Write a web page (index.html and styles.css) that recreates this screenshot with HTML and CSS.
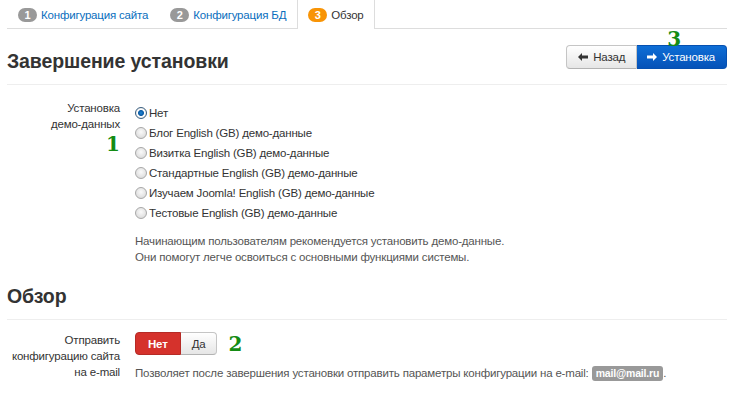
FILE: index.html
```html
<!DOCTYPE html>
<html lang="ru">
<head>
    <meta charset="UTF-8">
    <title>Установка Joomla</title>
    <link rel="stylesheet" href="styles.css">
</head>
<body>
    <div class="page">
        <ul class="steps">
            <li class="step"><span class="badge">1</span><a href="#">Конфигурация сайта</a></li>
            <li class="step"><span class="badge">2</span><a href="#">Конфигурация БД</a></li>
            <li class="step active"><span class="badge badge-warning">3</span><span>Обзор</span></li>
        </ul>

        <div class="page-head">
            <h1>Завершение установки</h1>
            <div class="btn-group">
                <span class="mark mark-top">3</span>
                <button class="btn">
                    <svg width="10" height="8" viewBox="0 0 10 8"><path d="M0 4 L4 0 L4 2.5 L10 2.5 L10 5.5 L4 5.5 L4 8 Z" fill="#333"/></svg>
                    Назад
                </button>
                <button class="btn btn-primary">
                    <svg width="10" height="8" viewBox="0 0 10 8"><path d="M10 4 L6 0 L6 2.5 L0 2.5 L0 5.5 L6 5.5 L6 8 Z" fill="#fff"/></svg>
                    Установка
                </button>
            </div>
        </div>

        <div class="control-group">
            <div class="control-label">
                <label>Установка <span class="nowrap">демо-данных</span></label>
                <div class="mark">1</div>
            </div>
            <div class="controls">
                <label class="radio"><input type="radio" name="sample" checked> Нет</label>
                <label class="radio"><input type="radio" name="sample"> Блог English (GB) демо-данные</label>
                <label class="radio"><input type="radio" name="sample"> Визитка English (GB) демо-данные</label>
                <label class="radio"><input type="radio" name="sample"> Стандартные English (GB) демо-данные</label>
                <label class="radio"><input type="radio" name="sample"> Изучаем Joomla! English (GB) демо-данные</label>
                <label class="radio"><input type="radio" name="sample"> Тестовые English (GB) демо-данные</label>
                <p class="help">Начинающим пользователям рекомендуется установить демо-данные.<br>Они помогут легче освоиться с основными функциями системы.</p>
            </div>
        </div>

        <h2 class="section-title">Обзор</h2>

        <div class="control-group">
            <div class="control-label">
                <label>Отправить <span class="nowrap">конфигурацию сайта</span> на e-mail</label>
            </div>
            <div class="controls">
                <div class="toggle-row">
                    <div class="toggle">
                        <button class="btn btn-danger">Нет</button>
                        <button class="btn">Да</button>
                    </div>
                    <span class="mark">2</span>
                </div>
                <p class="help">Позволяет после завершения установки отправить параметры конфигурации на e-mail: <span class="label">mail@mail.ru</span>.</p>
            </div>
        </div>
    </div>
</body>
</html>
```

FILE: styles.css
```css
* {
    box-sizing: border-box;
    margin: 0;
    padding: 0;
}

body {
    font-family: "Liberation Sans", Arial, sans-serif;
    font-size: 11.5px;
    letter-spacing: -0.18px;
    line-height: 16px;
    color: #333;
    background: #fff;
}

.page {
    padding: 0 7px;
}

.nowrap {
    white-space: nowrap;
}

.steps {
    list-style: none;
    display: flex;
    height: 29px;
    border-bottom: 1px solid #ddd;
}

.step {
    display: flex;
    align-items: center;
    gap: 4px;
    padding: 0 10px;
    border: 1px solid transparent;
    border-bottom: none;
}

.step a {
    color: #0a6ebd;
    text-decoration: none;
}

.step.active {
    border-color: #ddd;
    border-top: none;
    margin-bottom: -1px;
    background: #fff;
    height: 29px;
}

.badge {
    display: inline-block;
    min-width: 19px;
    height: 14px;
    line-height: 14px;
    border-radius: 8px;
    background: #999;
    color: #fff;
    font-size: 11px;
    font-weight: bold;
    letter-spacing: 0;
    text-align: center;
}

.badge-warning {
    background: #f89406;
}

.page-head {
    display: flex;
    justify-content: space-between;
    align-items: flex-start;
    margin-top: 16px;
    padding-bottom: 11px;
    border-bottom: 1px solid #eee;
}

h1,
.section-title {
    font-size: 19.5px;
    line-height: 24px;
    font-weight: bold;
    letter-spacing: -0.1px;
    color: #333;
}

h1 {
    padding-top: 4px;
}

.btn-group {
    position: relative;
    display: flex;
}

.btn {
    display: inline-flex;
    align-items: center;
    gap: 5px;
    height: 24px;
    padding: 0 11px;
    font-family: inherit;
    font-size: 11.5px;
    letter-spacing: -0.18px;
    color: #333;
    background: linear-gradient(#fff, #e6e6e6);
    border: 1px solid #c5c5c5;
    border-bottom-color: #b3b3b3;
    cursor: pointer;
}

.btn-group .btn:first-of-type,
.toggle .btn:first-child {
    border-radius: 4px 0 0 4px;
}

.btn-group .btn:last-child,
.toggle .btn:last-child {
    border-radius: 0 4px 4px 0;
    border-left: none;
}

.btn-primary {
    color: #fff;
    background: linear-gradient(#0e6ed6, #0552b8);
    border-color: #0650b0;
    padding: 0 11px 0 10px;
}

.btn-danger {
    color: #fff;
    font-weight: bold;
    background: #d5322c;
    border-color: #b52b26;
    padding: 0 12px;
}

.mark {
    font-family: "DejaVu Serif", "Liberation Serif", serif;
    font-size: 20px;
    line-height: 16px;
    font-weight: bold;
    letter-spacing: 0;
    color: #148c14;
}

.mark-top {
    position: absolute;
    top: -14px;
    left: 101px;
}

.control-group {
    display: flex;
    margin-top: 15px;
}

.control-label {
    width: 113px;
    text-align: right;
    flex-shrink: 0;
}

.control-label .mark {
    margin-top: 4px;
}

.controls {
    margin-left: 15px;
    padding-top: 3px;
}

.radio {
    display: flex;
    align-items: center;
    gap: 2px;
    height: 20px;
}

.radio input {
    appearance: none;
    width: 12px;
    height: 12px;
    border-radius: 50%;
    border: 1px solid #a8a8a8;
    background: radial-gradient(circle at 50% 40%, #fafafa, #d4d4d4);
    margin: 0;
}

.radio input:checked {
    border-color: #3a5f80;
    background: radial-gradient(circle, #1f86d6 0, #0a5aa4 2.5px, #fff 3.5px, #dcdcdc 6px);
}

.help {
    margin-top: 10px;
    color: #555;
}

.section-title {
    margin-top: 19px;
    padding-bottom: 11px;
    border-bottom: 1px solid #eee;
}

.control-group + .section-title + .control-group {
    margin-top: 12px;
}

.controls:has(.toggle-row) {
    padding-top: 0;
}

.toggle-row {
    display: flex;
    align-items: center;
    gap: 11px;
}

.toggle {
    display: flex;
}

.toggle .btn {
    height: 23px;
}

.label {
    display: inline-block;
    padding: 0 4px;
    background: #999;
    color: #fff;
    font-size: 10.5px;
    font-weight: bold;
    line-height: 15px;
    border-radius: 3px;
}
```
